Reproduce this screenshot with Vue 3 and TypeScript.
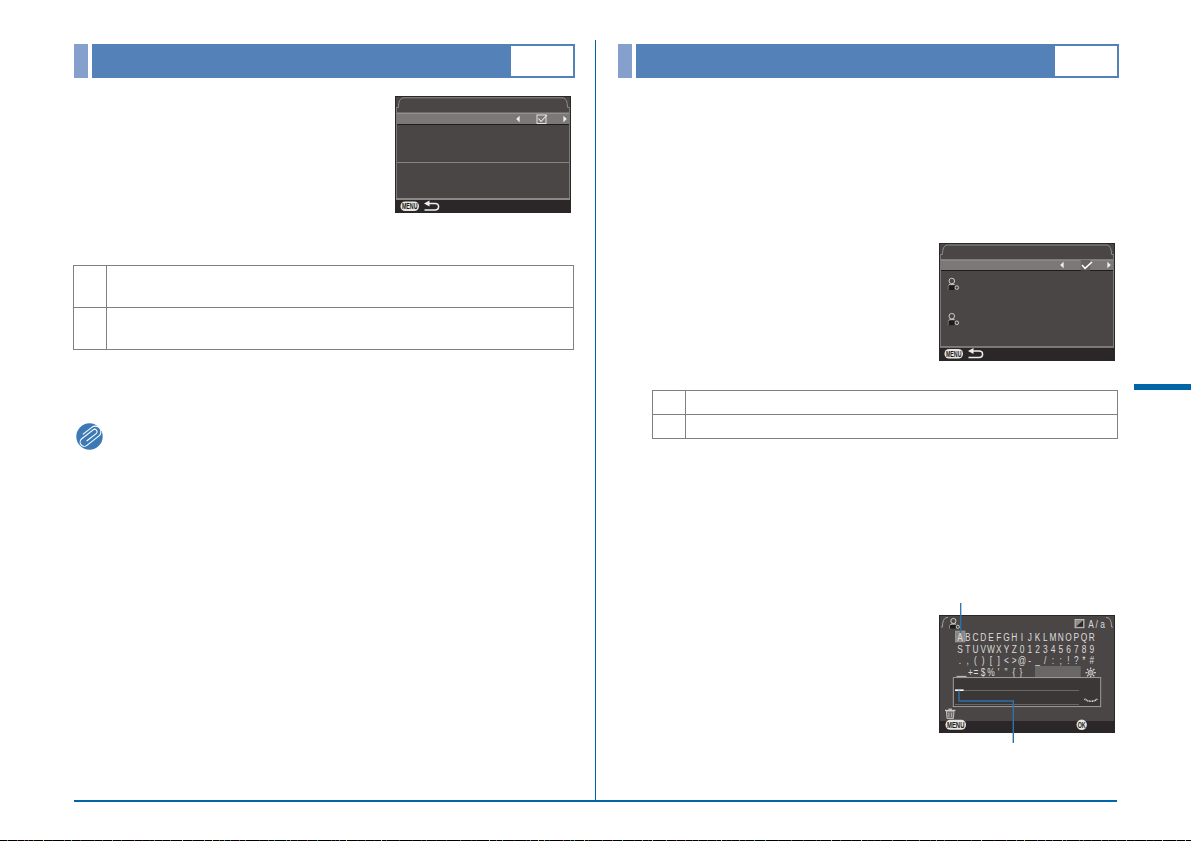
<script setup lang="ts">
import { computed } from 'vue'

const rows: string[][] = [
  'ABCDEFGHIJKLMNOPQR'.split(''),
  'STUVWXYZ0123456789'.split(''),
  ['.', ',', '(', ')', '[', ']', '<', '>', '@', '-', '_', '/', ':', ';', '!', '?', '*', '#'],
]
const rowY = [26, 37.8, 49.4]
const narrow = 0.76
const keyX = (i: number) => (21 + i * 7.75) / narrow

const lastRow = [
  { c: '+', x: 31.5 },
  { c: '=', x: 37 },
  { c: '$', x: 44 },
  { c: '%', x: 52 },
  { c: "'", x: 59.5 },
  { c: '"', x: 67 },
  { c: '{', x: 75 },
  { c: '}', x: 82 },
]

const rays = Array.from({ length: 8 }, (_, i) => {
  const a = (i * Math.PI) / 4
  return {
    x1: 151.7 + Math.cos(a) * 3.2,
    y1: 57.7 + Math.sin(a) * 3.2,
    x2: 151.7 + Math.cos(a) * 5.2,
    y2: 57.7 + Math.sin(a) * 5.2,
  }
})

// The last pixel row of the scan: black with scattered coloured pixels.
const noiseBackground = computed(() => {
  const palette = ['#1d3b52', '#4b1d3f', '#3f4b1d', '#c33', '#3c9', '#93c', '#cc3', '#39c', '#555']
  const stops: string[] = []
  let seed = 7
  let x = 0
  while (x < 1191) {
    seed = (seed * 1103515245 + 12345) & 0x7fffffff
    const gap = 3 + (seed >> 8) % 11
    const color = palette[(seed >> 16) % palette.length]
    stops.push(`#000 ${x}px ${x + gap}px`, `${color} ${x + gap}px ${x + gap + 1}px`)
    x += gap + 1
  }
  return { background: `linear-gradient(to right, ${stops.join(', ')})` }
})
</script>

<template>
  <div class="page">
    <div class="spread">
      <section class="col col-left">
        <header class="heading">
          <div class="heading-tab"></div>
          <div class="heading-bar"><div class="heading-box"></div></div>
        </header>

        <div class="figure fig-a">
          <svg class="screen" width="176" height="117" viewBox="0 0 176 117">
            <rect width="176" height="117" fill="#2b2728" />
            <rect x="1" y="1" width="174" height="102" fill="#4a4646" />
            <path d="M1 11.5 H3.4 Q3.6 2.4 8 1.8 H168 Q172.4 2.4 172.6 11.5 H175" fill="none" stroke="#8c8a88" stroke-width="1" />
            <rect x="1" y="17" width="174" height="11" fill="#7b7977" />
            <rect x="1" y="16.6" width="174" height="1" fill="#a3a19f" />
            <rect x="1" y="28" width="174" height="1" fill="#1f1b1c" />
            <rect x="1" y="66" width="174" height="0.8" fill="#94928f" />
            <rect x="1" y="11" width="1" height="92" fill="#7b7977" />
            <rect x="174" y="11" width="1" height="92" fill="#7b7977" />
            <rect x="1" y="102" width="174" height="2" fill="#8b8986" />
            <path d="M124.6 19.8 V26.2 L121.2 23 Z" fill="#f0efee" />
            <path d="M168.4 19.8 V26.2 L171.8 23 Z" fill="#f0efee" />
            <rect x="142" y="19" width="9" height="8.5" fill="none" stroke="#ecebea" stroke-width="0.9" />
            <path d="M143.5 22.5 L146 25.5 L152 19" fill="none" stroke="#ecebea" stroke-width="1.1" />
            <rect x="5.5" y="105.4" width="18.5" height="9.6" rx="4.6" fill="#e8e6e4" />
            <text class="menu" x="14.7" y="113.3" textLength="15.5" lengthAdjust="spacingAndGlyphs">MENU</text>
            <path d="M31 107.6 H40 Q43.6 107.6 43.6 110.8 Q43.6 114 40 114 H29.5" fill="none" stroke="#f0efee" stroke-width="1.5" />
            <path d="M29 107.6 L34.5 104.6 V110.6 Z" fill="#f0efee" />
          </svg>
        </div>

        <div class="options options-tall">
          <div class="option"><div class="option-key"></div><div class="option-text"></div></div>
          <div class="option"><div class="option-key"></div><div class="option-text"></div></div>
        </div>

        <svg class="memo" width="27" height="27" viewBox="-13.5 -13.5 27 27">
          <circle r="13.2" fill="#3d7ab5" />
          <g transform="rotate(-38)">
            <path
              d="M-5 1.8 H7 A2.4 2.4 0 0 0 7 -3 H-7.5 A4.2 4.2 0 0 0 -7.5 5.4 H7.5 A5.6 5.6 0 0 0 7.5 -5.8 H-4"
              fill="none"
              stroke="#ffffff"
              stroke-width="1.1"
            />
          </g>
        </svg>
      </section>

      <section class="col col-right">
        <header class="heading">
          <div class="heading-tab"></div>
          <div class="heading-bar"><div class="heading-box"></div></div>
        </header>

        <div class="figure fig-b">
          <svg class="screen" width="176" height="118" viewBox="0 0 176 118">
            <rect width="176" height="118" fill="#2b2728" />
            <rect x="1" y="1" width="174" height="103" fill="#4a4646" />
            <path d="M1 11.5 H3.4 Q3.6 2.6 8 2 H168 Q172.4 2.6 172.6 11.5 H175" fill="none" stroke="#8c8a88" stroke-width="1" />
            <rect x="1" y="17" width="174" height="10" fill="#7b7977" />
            <rect x="1" y="16.4" width="174" height="1" fill="#a3a19f" />
            <rect x="1" y="27" width="174" height="1" fill="#1f1b1c" />
            <rect x="1" y="11" width="1" height="93" fill="#7b7977" />
            <rect x="174" y="11" width="1" height="93" fill="#7b7977" />
            <rect x="1" y="103.2" width="174" height="1.6" fill="#8b8986" />
            <path d="M124.6 18.8 V25.2 L121.2 22 Z" fill="#f0efee" />
            <path d="M168.4 18.8 V25.2 L171.8 22 Z" fill="#f0efee" />
            <rect x="141.7" y="17" width="9.5" height="10.5" fill="#666462" />
            <path d="M143 22 L146 25.4 L153 19" fill="none" stroke="#ffffff" stroke-width="1.5" />
            <g fill="none" stroke="#d8d6d4" stroke-width="0.9">
              <circle cx="12.8" cy="38" r="2.8" />
              <path d="M9.4 46.8 V43.4 Q9.4 41.4 11.4 41.4 H15.6" />
              <circle cx="17.8" cy="44.6" r="1.8" />
              <circle cx="12.8" cy="73.2" r="2.8" />
              <path d="M9.4 82 V78.6 Q9.4 76.6 11.4 76.6 H15.6" />
              <circle cx="17.8" cy="79.8" r="1.8" />
            </g>
            <rect x="9.4" y="42.4" width="6" height="4.6" fill="#1f1b1c" />
            <rect x="9.4" y="77.6" width="6" height="4.6" fill="#1f1b1c" />
            <rect x="5.5" y="106" width="18.5" height="9.6" rx="4.6" fill="#e8e6e4" />
            <text class="menu" x="14.7" y="113.9" textLength="15.5" lengthAdjust="spacingAndGlyphs">MENU</text>
            <path d="M31 108 H40 Q43.6 108 43.6 111.2 Q43.6 114.4 40 114.4 H29.5" fill="none" stroke="#f0efee" stroke-width="1.5" />
            <path d="M29 108 L34.5 105 V111 Z" fill="#f0efee" />
          </svg>
        </div>

        <div class="options options-short">
          <div class="option"><div class="option-key"></div><div class="option-text"></div></div>
          <div class="option"><div class="option-key"></div><div class="option-text"></div></div>
        </div>

        <div class="figure fig-c">
          <svg class="screen" width="176" height="140" viewBox="0 -12 176 140">
            <rect width="176" height="118" fill="#2b2728" />
            <rect x="1" y="1" width="174" height="105" fill="#4a4646" />
            <path d="M2 12 H3.4 Q3.6 3 8 2.5 H9 M167 2.5 H168 Q172.4 3 172.6 12 H174" fill="none" stroke="#a09e9c" stroke-width="1" />

            <g fill="none" stroke="#d8d6d4" stroke-width="0.9">
              <circle cx="14.4" cy="6" r="2.6" />
              <path d="M11 13.6 V10.8 Q11 9 13 9 H17" />
              <circle cx="18.8" cy="11.8" r="1.6" />
            </g>
            <rect x="11" y="10" width="5.6" height="3.6" fill="#1f1b1c" />

            <rect x="136" y="4.4" width="9" height="8.4" fill="#8e8c8a" stroke="#d8d6d4" stroke-width="0.7" />
            <path d="M137 11.8 L144 5.4 V11.8 Z" fill="#2b2728" />

            <rect x="16.3" y="16" width="9.7" height="11" fill="#8a8886" stroke="#b0aeac" stroke-width="0.5" />
            <g :transform="`scale(${narrow} 1)`">
              <text class="letters" :x="157.5 / narrow" y="13.2">A / a</text>
              <g v-for="(row, r) in rows" :key="r">
                <text v-for="(c, i) in row" :key="i" class="letters" :x="keyX(i)" :y="rowY[r]">{{ c }}</text>
              </g>
              <text v-for="k in lastRow" :key="k.x" class="letters" :x="k.x / narrow" y="61.4">{{ k.c }}</text>
            </g>
            <path d="M17.5 61.4 H27.5" stroke="#d8d6d4" stroke-width="0.9" />

            <rect x="96" y="51" width="45.7" height="11.3" fill="#6a6866" />
            <circle cx="151.7" cy="57.7" r="2.4" fill="#8a8886" stroke="#d8d6d4" stroke-width="0.9" />
            <line
              v-for="(ray, i) in rays"
              :key="i"
              :x1="ray.x1"
              :y1="ray.y1"
              :x2="ray.x2"
              :y2="ray.y2"
              stroke="#d8d6d4"
              stroke-width="1.2"
            />

            <rect x="14.3" y="62.6" width="147.4" height="29" fill="#3b3737" stroke="#a9a7a5" stroke-width="0.9" />
            <rect x="16" y="75" width="124" height="0.7" fill="#807e7c" />
            <rect x="16" y="89" width="124" height="0.7" fill="#807e7c" />
            <rect x="16" y="74.4" width="8.6" height="1.6" fill="#ffffff" />
            <path d="M145.5 84 Q152 88.6 158.5 84" fill="none" stroke="#e6e4e2" stroke-width="1.6" stroke-dasharray="1 0.6" />

            <path d="M7.4 96 H15 L14.4 103.4 H8 Z" fill="#6e6c6a" stroke="#cfcdcb" stroke-width="0.9" />
            <path d="M9.8 97.6 V102 M12.6 97.6 V102" stroke="#cfcdcb" stroke-width="0.7" />
            <rect x="6" y="94.8" width="10.4" height="1.2" fill="#cfcdcb" />
            <rect x="9.4" y="93.6" width="3.6" height="1.2" fill="#cfcdcb" />

            <rect x="6.5" y="104.8" width="20.5" height="10" rx="4.8" fill="#e8e6e4" />
            <text class="menu" x="16.7" y="113" textLength="17.5" lengthAdjust="spacingAndGlyphs">MENU</text>
            <circle cx="142.7" cy="109.7" r="5.2" fill="#e8e6e4" />
            <text class="menu" x="142.7" y="112.8" textLength="8" lengthAdjust="spacingAndGlyphs">OK</text>

            <path d="M21.7 -12 V18" fill="none" stroke="#2a72b0" stroke-width="1.3" />
            <path d="M20 75.6 V86 H74.3 V128" fill="none" stroke="#2a72b0" stroke-width="1.4" />
          </svg>
        </div>
      </section>

      <aside class="side">
        <div class="side-tab"></div>
      </aside>
    </div>

    <div class="rule"></div>
    <div class="scanline" :style="noiseBackground"></div>
  </div>
</template>

<style scoped>
.page {
  width: 1191px;
  height: 841px;
  background: #ffffff;
  display: flex;
  flex-direction: column;
  overflow: hidden;
  font-family: "Liberation Sans", Arial, sans-serif;
}

.spread {
  display: flex;
  height: 760px;
  margin-top: 40px;
  flex: none;
}

.col {
  flex: none;
  padding-top: 4px;
  box-sizing: border-box;
  display: flex;
  flex-direction: column;
}

.col-left {
  width: 596px;
  padding-left: 73.5px;
  padding-right: 20px;
  border-right: 1px solid #0066a8;
}

.col-right {
  width: 523px;
  padding-left: 22px;
}

.heading {
  display: flex;
  gap: 4px;
  height: 34px;
  flex: none;
}

.heading-tab {
  width: 14px;
  background: #85a0cc;
  flex: none;
}

.heading-bar {
  flex: 1;
  background: #5482b8;
  display: flex;
  justify-content: flex-end;
  padding: 2px 2px 2px 0;
  box-sizing: border-box;
}

.heading-box {
  width: 62px;
  background: #ffffff;
}

.figure {
  display: flex;
  justify-content: flex-end;
  padding-right: 4px;
  flex: none;
}

.fig-a {
  margin-top: 18px;
}

.fig-b {
  margin-top: 165px;
}

.fig-c {
  margin-top: 164px;
}

.screen {
  display: block;
}

.options {
  border: 1.5px solid #808080;
  box-sizing: border-box;
  display: flex;
  flex-direction: column;
  flex: none;
}

.options-tall {
  margin-top: 52px;
  margin-left: -0.5px;
  height: 85px;
  width: 500.5px;
}

.options-short {
  margin-top: 29px;
  height: 49px;
  width: 465.5px;
  margin-left: 34px;
}

.option {
  flex: 1;
  display: flex;
}

.option + .option {
  border-top: 1.5px solid #808080;
}

.option-key {
  width: 32px;
  border-right: 1.5px solid #808080;
  flex: none;
}

.option-text {
  flex: 1;
}

.memo {
  display: block;
  margin-top: 73px;
  margin-left: 2px;
  flex: none;
}

.side {
  flex: 1;
  margin-left: 15px;
  padding-top: 344px;
}

.side-tab {
  height: 6px;
  background: #0066a8;
}

.rule {
  height: 1.5px;
  width: 1043.5px;
  margin-left: 73.5px;
  background: #0066a8;
  flex: none;
}

.scanline {
  height: 1px;
  margin-top: auto;
  flex: none;
}

.letters {
  font-family: "Liberation Sans", Arial, sans-serif;
  font-size: 11px;
  fill: #dedcda;
  text-anchor: middle;
}

.menu {
  font-family: "Liberation Sans", Arial, sans-serif;
  font-size: 8.6px;
  font-weight: 700;
  fill: #231f20;
  text-anchor: middle;
}
</style>

<style>
html,
body {
  margin: 0;
  background: #ffffff;
}
</style>
